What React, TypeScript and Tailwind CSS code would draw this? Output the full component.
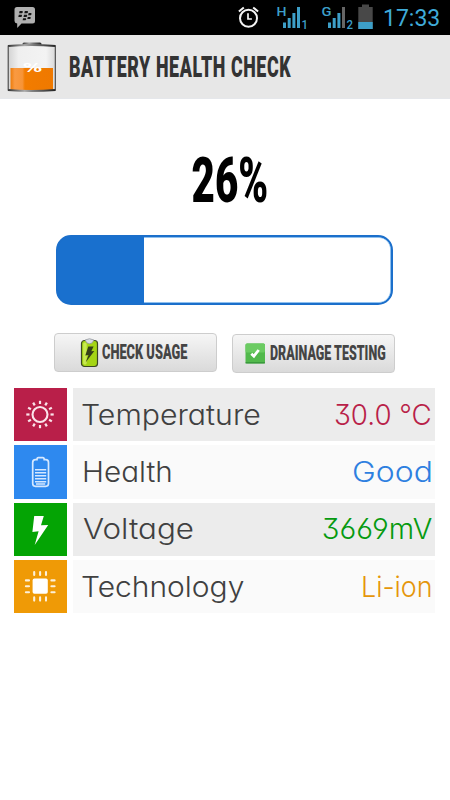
import { clsx } from "clsx";

type Row = {
  label: string;
  value: string;
  tile: string;
  text: string;
  labelClass: string;
  valueClass: string;
  icon: React.ReactNode;
};

const SunIcon = () => (
  <svg className="h-[53px] w-[53px]" viewBox="0 0 53 53" fill="none" stroke="#fbe4ea">
    <circle cx="26" cy="26.5" r="7.5" strokeWidth="2.1" />
    {[0, 30, 60, 90, 120, 150, 180, 210, 240, 270, 300, 330].map((a) => (
      <path key={a} d="M26 16V12.8" strokeWidth="2.2" transform={`rotate(${a} 26 26.5)`} />
    ))}
  </svg>
);

const CellIcon = () => (
  <svg className="h-[53px] w-[53px]" viewBox="0 0 53 53" fill="none" stroke="#d5e8ff">
    <path
      d="M23 14.6Q23 12.6 24.4 12.6H28.8Q30.2 12.6 30.2 14.6H31.8Q34.5 14.6 34.5 17.4V38.6Q34.5 41.3 31.8 41.3H21.4Q18.7 41.3 18.7 38.6V17.4Q18.7 14.6 21.4 14.6Z"
      strokeWidth="1.7"
    />
    <path d="M21 24.8H32.2M21 27.8H32.2M21 30.8H32.2M21 33.8H32.2M21 36.8H32.2M22 39H31.2" strokeWidth="1.5" />
  </svg>
);

const BoltIcon = () => (
  <svg className="h-[53px] w-[53px]" viewBox="0 0 53 53" fill="#fff">
    <path d="M20.2 13H29.8L27 22.3L34.2 22L20.7 42L24.6 28.2L18.4 29Z" />
  </svg>
);

const ChipIcon = () => (
  <svg className="h-[53px] w-[53px]" viewBox="0 0 53 53" stroke="#fff" fill="#fff">
    <rect x="18.6" y="18.6" width="15.2" height="15.2" rx="1.8" stroke="none" />
    <path
      d="M20.2 12V15M26.1 12V15M32 12V15M20.2 37.4V40.6M26.1 37.4V40.6M32 37.4V40.6M11.9 20.4H15M11.9 26.3H15M11.9 32.2H15M37.4 20.4H40.6M37.4 26.3H40.6M37.4 32.2H40.6"
      strokeWidth="2.1"
      strokeLinecap="round"
      opacity="0.85"
    />
  </svg>
);

const BatteryLogo = () => (
  <svg className="h-[52px] w-[50px]" viewBox="0 0 50 52">
    <defs>
      <linearGradient id="metal" x1="0" x2="1" y1="0" y2="0">
        <stop offset="0" stopColor="#333" />
        <stop offset="0.35" stopColor="#aaa" />
        <stop offset="0.55" stopColor="#777" />
        <stop offset="1" stopColor="#222" />
      </linearGradient>
      <linearGradient id="glass" x1="0" x2="1" y1="0" y2="0">
        <stop offset="0" stopColor="#d2d2d2" />
        <stop offset="0.22" stopColor="#efefef" />
        <stop offset="0.8" stopColor="#f3f3f3" />
        <stop offset="1" stopColor="#d8d8d8" />
      </linearGradient>
      <linearGradient id="charge" x1="0" x2="1" y1="0" y2="0">
        <stop offset="0" stopColor="#ed7c0a" />
        <stop offset="0.1" stopColor="#f99a42" />
        <stop offset="0.28" stopColor="#f79437" />
        <stop offset="0.34" stopColor="#f27c00" />
        <stop offset="1" stopColor="#ef7900" />
      </linearGradient>
    </defs>
    <rect x="15.5" y="1.5" width="19" height="4" rx="1.5" fill="url(#metal)" />
    <rect x="1" y="4" width="47.5" height="46" rx="2.5" fill="url(#glass)" />
    <path d="M3.5 27H46V49H3.5Z" fill="url(#charge)" />
    <path d="M1 5Q24 3 48.5 5M1 49Q24 51 48.5 49" fill="none" stroke="url(#metal)" strokeWidth="2" />
    <path d="M1.2 4.5V49.5M48.3 4.5V49.5" stroke="#444" strokeWidth="1.1" />
    <text x="16" y="31" fontFamily="DejaVu Sans" fontWeight="bold" fontSize="12" fill="#fff" textLength="19" lengthAdjust="spacingAndGlyphs">
      %
    </text>
  </svg>
);

const BbmIcon = () => (
  <svg className="h-[22px] w-[22px]" viewBox="0 0 22 22">
    <path d="M3 0H18.5Q21 0 21 2.5V14Q21 16.5 18.5 16.5H7.5L3.2 21V16.5Q0.5 16.2 0.5 14V2.5Q0.5 0 3 0Z" fill="#b0b0b0" />
    <g fill="#151515">
      <path d="M5.6 4H8.5Q9.5 5.4 8 6.2H5.1ZM10.8 4H13.7Q14.7 5.4 13.2 6.2H10.3ZM4.8 7.7H7.7Q8.7 9.1 7.2 9.9H4.3ZM10 7.7H12.9Q13.9 9.1 12.4 9.9H9.5ZM14.6 6.1H17.3Q18.1 7.5 16.8 8.2H14.1ZM13.8 9.9H16.5Q17.3 11.3 16 12H13.3ZM9.1 11.2H11.9Q12.7 12.6 11.4 13.3H8.6Z" />
    </g>
  </svg>
);

const AlarmIcon = () => (
  <svg className="h-[24px] w-[22px]" viewBox="0 0 22 24" fill="none" stroke="#f5f5f5">
    <circle cx="10.5" cy="13.3" r="8.5" strokeWidth="2" />
    <path d="M10 8.3V14H13.9" strokeWidth="1.7" />
    <path d="M0.9 6.5L5.8 2.5M20.1 6.5L15.2 2.5" strokeWidth="2" />
  </svg>
);

const Signal = ({ net, sim, weak }: { net: string; sim: string; weak?: boolean }) => (
  <svg className="h-[28px] w-[33px] overflow-visible" viewBox="-1 0 33 28" fill="#3d9fc8">
    <text x="-0.5" y="10.5" fontFamily="Roboto" fontSize="12.5" fontWeight="500" textLength="10" lengthAdjust="spacingAndGlyphs">
      {net}
    </text>
    <rect x="6" y="17.5" width="3" height="5.5" />
    <rect x="10.7" y="13" width="3" height="10" />
    <rect x="15.4" y="8" width="3" height="15" />
    <rect x="20" y="2" width="3" height="21" fill={weak ? "#666" : "#3d9fc8"} />
    <text x="24.6" y="23.5" fontFamily="Roboto" fontSize="13" fontWeight="500" textLength="6.5" lengthAdjust="spacingAndGlyphs">
      {sim}
    </text>
  </svg>
);

const StatusBattery = () => (
  <svg className="h-[26px] w-[15px]" viewBox="0 0 15 26">
    <path d="M4 0.5H11V3H14.7V25H0.3V3H4Z" fill="#484848" />
    <rect x="0.3" y="18" width="14.4" height="7" fill="#3d9fc8" />
  </svg>
);

const GreenBattery = () => (
  <svg className="h-[30px] w-[20px]" viewBox="0 0 20 30">
    <rect x="1.5" y="2.5" width="16" height="26" rx="3" fill="#a4d514" stroke="#3b4823" strokeWidth="1.2" />
    <rect x="3.2" y="4.5" width="3.5" height="22" rx="1.5" fill="#c9ea52" />
    <path d="M5 2Q9.5 -0.5 14 2L12 5Q9.5 6.5 7 5Z" fill="#d9dde5" stroke="#8c9194" strokeWidth="0.7" />
    <path d="M8.3 8.5H13.6L11.3 13.2L14.3 13L5.6 24.5L8.5 17L5.3 17.4Z" fill="#354018" />
  </svg>
);

const GreenCheck = () => (
  <svg className="h-[21px] w-[21px]" viewBox="0 0 21 21">
    <rect x="0.5" y="0.5" width="19.5" height="20" rx="1.5" fill="#52b94c" />
    <rect x="0.5" y="0.5" width="19.5" height="9" rx="1.5" fill="#6bcb62" />
    <path d="M0.5 19.8H20" stroke="#35913a" strokeWidth="1.2" />
    <path d="M6.3 10.7L8.9 13.2L13.7 7" fill="none" stroke="#fff" strokeWidth="2.8" />
  </svg>
);

const rows: Row[] = [
  { label: "Temperature", value: "30.0 °C", tile: "bg-[#b91f49]", text: "text-[#b91f49]", labelClass: "ml-[8px] scale-x-[1.08]", valueClass: "mr-[3px] scale-x-[0.99]", icon: <SunIcon /> },
  { label: "Health", value: "Good", tile: "bg-[#2e89ef]", text: "text-[#2e7fe0]", labelClass: "ml-[9px] scale-x-[1.06]", valueClass: "mr-[2px] scale-x-[1.14]", icon: <CellIcon /> },
  { label: "Voltage", value: "3669mV", tile: "bg-[#04a404]", text: "text-[#069a10]", labelClass: "ml-[10px] scale-x-[1.12]", valueClass: "mr-[3px] scale-x-[1.04]", icon: <BoltIcon /> },
  { label: "Technology", value: "Li-ion", tile: "bg-[#ef9a06]", text: "text-[#e5960a]", labelClass: "ml-[8px] scale-x-[1.07]", valueClass: "mr-[2px] scale-x-[0.96]", icon: <ChipIcon /> },
];

const App = () => {
  return (
    <div className="h-[800px] w-[450px] overflow-hidden bg-white font-['Roboto',sans-serif]">
      <div className="flex h-[35px] items-start bg-black">
        <div className="ml-[14px] mt-[7px]">
          <BbmIcon />
        </div>
        <div className="ml-auto mt-[5px]">
          <AlarmIcon />
        </div>
        <div className="ml-[16px] mt-[5px]">
          <Signal net="H" sim="1" />
        </div>
        <div className="ml-[12px] mt-[5px]">
          <Signal net="G" sim="2" weak />
        </div>
        <div className="ml-[4px] mt-[4px]">
          <StatusBattery />
        </div>
        <div className="ml-[10px] mr-[10px] mt-[6px] w-[57px] whitespace-nowrap text-[23px] leading-[26px] text-[#3fabd8]">
          17:33
        </div>
      </div>

      <div className="flex h-16 items-center border-b border-gray-200 bg-[#e7e7e7]">
        <div className="ml-[7px]">
          <BatteryLogo />
        </div>
        <h1 className="ml-[12px] w-[224px] origin-left scale-x-[0.595] whitespace-nowrap text-[30px] font-black tracking-[1px] text-[#333]">
          BATTERY HEALTH CHECK
        </h1>
      </div>

      <div className="mt-[50px] flex h-16 justify-center pl-[9px]">
        <div className="origin-center scale-x-[0.64] text-[63px] font-black leading-[64px] text-black">26%</div>
      </div>

      <div className="ml-14 mt-[22px] h-[70px] w-[337px] overflow-hidden rounded-[15px] border-[2.5px] border-[#1b6fcb] bg-[#1970ce]">
        <div className="ml-[86px] h-full rounded-r-[12px] border border-l-0 border-[#8fc0ee] bg-white" />
      </div>

      <div className="ml-[54px] mt-7 flex gap-[15px]">
        <button className="flex h-[39px] w-[163px] items-center rounded-[4px] border border-[#cdcdcd] bg-linear-to-b from-[#f6f6f6] to-[#dadada] pl-[25px]">
          <GreenBattery />
          <span className="ml-0.5 w-[88px] origin-left scale-x-[0.61] whitespace-nowrap text-left text-[21px] font-black text-[#444]">
            CHECK USAGE
          </span>
        </button>
        <button className="mt-px flex h-[39px] w-[163px] items-center rounded-[4px] border border-[#cdcdcd] bg-linear-to-b from-[#f6f6f6] to-[#dadada] pl-3">
          <GreenCheck />
          <span className="ml-1 w-[118px] origin-left scale-x-[0.595] whitespace-nowrap text-left text-[21px] font-black text-[#444]">
            DRAINAGE TESTING
          </span>
        </button>
      </div>

      <div className="ml-[14px] mt-[15px] flex w-[421px] flex-col gap-1">
        {rows.map((row, i) => (
          <div key={row.label} className="flex h-[53.3px] gap-1.5">
            <div className={clsx("w-[53px] shrink-0", row.tile)}>{row.icon}</div>
            <div
              className={clsx(
                "flex flex-1 items-center justify-between font-['Inter',sans-serif] text-[28px] leading-none font-[280] [font-feature-settings:'cv11','ss01']",
                i % 2 === 0 ? "bg-[#ececec]" : "bg-[#fafafa]"
              )}
            >
              <span className={clsx("origin-left text-[#404040]", row.labelClass)}>{row.label}</span>
              <span className={clsx("origin-right", row.text, row.valueClass)}>{row.value}</span>
            </div>
          </div>
        ))}
      </div>
    </div>
  );
};

export default App;
